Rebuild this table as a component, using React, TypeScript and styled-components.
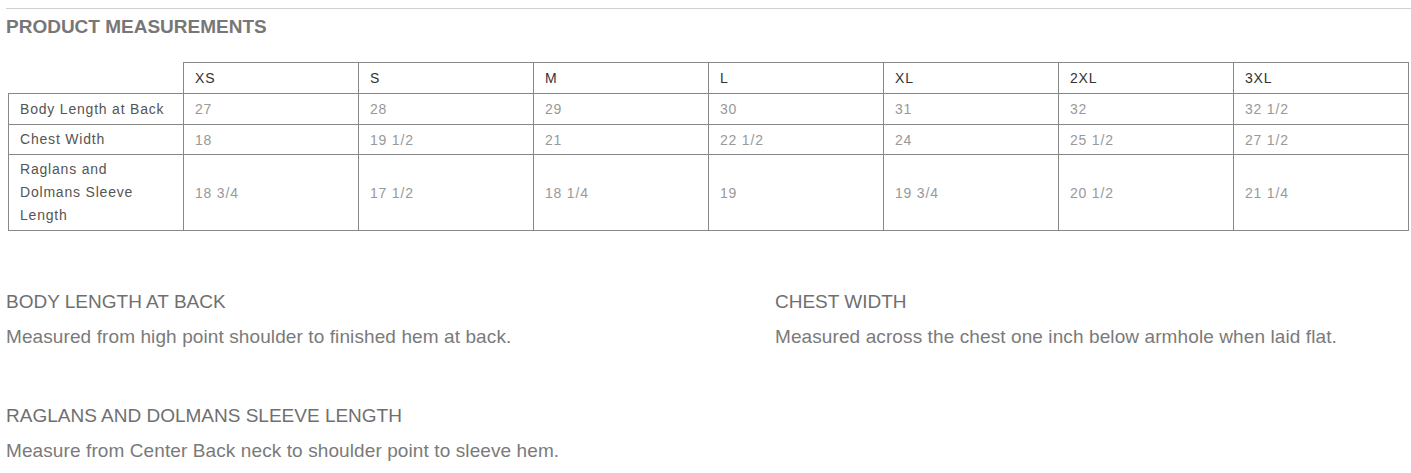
import { FC } from 'react';
import styled, { createGlobalStyle } from 'styled-components';

const sizes = ['XS', 'S', 'M', 'L', 'XL', '2XL', '3XL'];

const rows = [
  { label: 'Body Length at Back', height: 31, values: ['27', '28', '29', '30', '31', '32', '32 1/2'] },
  { label: 'Chest Width', height: 30, values: ['18', '19 1/2', '21', '22 1/2', '24', '25 1/2', '27 1/2'] },
  {
    label: 'Raglans and Dolmans Sleeve Length',
    height: 76,
    narrow: true,
    values: ['18 3/4', '17 1/2', '18 1/4', '19', '19 3/4', '20 1/2', '21 1/4'],
  },
];

const notes = [
  { title: 'BODY LENGTH AT BACK', text: 'Measured from high point shoulder to finished hem at back.' },
  { title: 'CHEST WIDTH', text: 'Measured across the chest one inch below armhole when laid flat.' },
  { title: 'RAGLANS AND DOLMANS SLEEVE LENGTH', text: 'Measure from Center Back neck to shoulder point to sleeve hem.' },
];

const App: FC = () => {
  return (
    <Page>
      <GlobalStyle />
      <Rule />
      <Title>PRODUCT MEASUREMENTS</Title>
      <SizeTable>
        <thead>
          <tr>
            <Corner />
            {sizes.map((s) => (
              <HeadCell key={s}>{s}</HeadCell>
            ))}
          </tr>
        </thead>
        <tbody>
          {rows.map((r) => (
            <Row key={r.label} $height={r.height}>
              <LabelCell $narrow={r.narrow}>{r.label}</LabelCell>
              {r.values.map((v, i) => (
                <ValueCell key={i}>{v}</ValueCell>
              ))}
            </Row>
          ))}
        </tbody>
      </SizeTable>
      <Notes>
        {notes.map((n) => (
          <Note key={n.title}>
            <NoteTitle>{n.title}</NoteTitle>
            <NoteText>{n.text}</NoteText>
          </Note>
        ))}
      </Notes>
    </Page>
  );
};

export default App;

const GlobalStyle = createGlobalStyle`
  body {
    margin: 0;
    background: #fff;
    font-family: 'Liberation Sans', Arial, sans-serif;
  }
`;

const Page = styled.div`
  width: 1411px;
  padding-top: 8px;
`;

const Rule = styled.div`
  margin-left: 6px;
  height: 1px;
  background: #d0d0d0;
`;

const Title = styled.h2`
  margin: 7px 0 0 6px;
  font-size: 19px;
  line-height: 22px;
  font-weight: bold;
  color: #777;
`;

const SizeTable = styled.table`
  margin: 24px 0 0 8px;
  border-collapse: collapse;
  table-layout: fixed;
  width: 1401px;
  font-size: 14px;
  letter-spacing: 0.8px;
`;

const Cell = styled.td`
  width: 175px;
  box-sizing: border-box;
  padding: 0 11px;
  text-align: left;
  vertical-align: middle;
  font-weight: normal;
  border: 1px solid #888;
`;

const Corner = styled(Cell).attrs({ as: 'th' })`
  height: 31px;
  border: none;
`;

const HeadCell = styled(Cell).attrs({ as: 'th' })`
  height: 31px;
  color: #333;
`;

const Row = styled.tr<{ $height: number }>`
  height: ${({ $height }) => $height}px;
`;

const LabelCell = styled(Cell)<{ $narrow?: boolean }>`
  color: #555;
  line-height: 23px;
  padding-right: ${({ $narrow }) => ($narrow ? '40px' : '11px')};
`;

const ValueCell = styled(Cell)`
  color: #999;
`;

const Notes = styled.div`
  margin: 60px 0 0 6px;
  display: grid;
  grid-template-columns: 769px 1fr;
  row-gap: 57px;
`;

const Note = styled.div`
  display: flex;
  flex-direction: column;
  gap: 13px;
`;

const NoteTitle = styled.div`
  font-size: 19px;
  line-height: 22px;
  color: #6f6f6f;
`;

const NoteText = styled.div`
  font-size: 19px;
  line-height: 22px;
  letter-spacing: 0.1px;
  color: #7a7a7a;
`;
